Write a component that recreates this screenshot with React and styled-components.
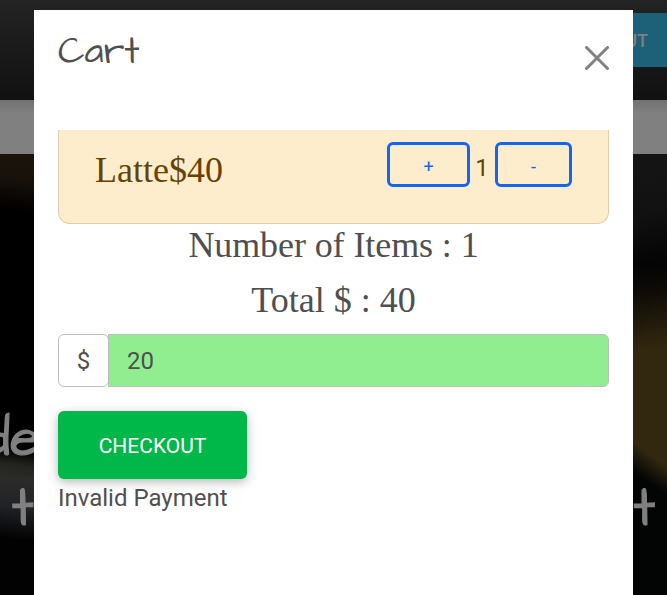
import React from "react";
import styled, { createGlobalStyle } from "styled-components";

const GlobalStyle = createGlobalStyle`
  *, *::before, *::after { box-sizing: border-box; }
  body {
    margin: 0;
    overflow: hidden;
    background: #000;
    color: #4f4f4f;
    font: 400 24px/36px Roboto, sans-serif;
  }
`;

const hand = `"Architects Daughter", Lato, cursive`;

const Page = styled.div`
  position: relative;
  display: flex;
  flex-direction: column;
  width: 667px;
  height: 595px;
  overflow: hidden;
`;

const Navbar = styled.header`
  display: flex;
  justify-content: flex-end;
  flex: none;
  height: 100px;
  padding-top: 13px;
  background: linear-gradient(#232323, #111);
`;

const NavButton = styled.button`
  display: flex;
  align-items: center;
  justify-content: flex-end;
  width: 130px;
  height: 54px;
  padding: 0 19px 0 0;
  border: 0;
  background: #1c6178;
  color: #808080;
  font: 500 18px/27px Roboto, sans-serif;
`;

const Band = styled.div`
  flex: none;
  height: 54px;
  background: linear-gradient(#727272, #808080 14px);
`;

const Hero = styled.main`
  display: flex;
  flex-direction: column;
  flex: 1;
  padding-top: 251px;
  color: #808080;
  background:
    linear-gradient(187deg, #1b140d, #17110a 30px, #000 62px, #000 298px, #24231f 314px, #2b2b2b 328px, #202226 356px, #020202 388px) 0 0 / 60px 100% no-repeat,
    linear-gradient(216deg, transparent 253px, #030404 277px) 100% 0 / 34px 100% no-repeat,
    linear-gradient(170deg, #151515, #111 60px, #040404 110px, #0c0a06 135px, #32270f 195px, #32270f) 100% 0 / 34px 100% no-repeat,
    #000;
`;

const HeroLine = styled.div`
  display: flex;
  justify-content: space-between;
  flex: none;
  height: 70px;
  padding: ${(p) => p.$padding};
  font: 400 53px/70px ${hand};
  -webkit-text-stroke: 1.2px #808080;
`;

const Lead = styled.span`
  margin-left: -17px;
`;

const Dialog = styled.section`
  position: absolute;
  top: 10px;
  left: 34px;
  display: flex;
  flex-direction: column;
  width: 599px;
  height: 600px;
  background: #fff;
`;

const DialogHeader = styled.div`
  display: flex;
  justify-content: space-between;
  flex: none;
  height: 120px;
  padding: 16px 24px 0;
`;

const Title = styled.h5`
  margin: 2px 0 0;
  font: 400 37.5px/48px ${hand};
`;

const CloseButton = styled.button`
  display: block;
  width: 24px;
  height: 24px;
  margin-top: 20px;
  padding: 0;
  border: 0;
  background: none;
  svg { display: block; }
`;

const DialogBody = styled.div`
  flex: 1;
  padding: 0 24px;
  overflow: hidden;
`;

const ItemCard = styled.div`
  display: flex;
  justify-content: space-between;
  height: 94px;
  padding: 12px 36px 0;
  border: 1px solid #dfcdab;
  border-top: 0;
  border-radius: 0 0 12px 12px;
  background: #feedcc;
  color: #664200;
`;

const ItemName = styled.div`
  padding-top: 7px;
  font: 400 36px/43px "Liberation Serif", serif;
`;

const Quantity = styled.div`
  display: flex;
  align-items: center;
  height: 45px;
`;

const Count = styled.span`
  width: 25px;
  padding: 6px 1px 0 0;
  text-align: center;
`;

const QuantityButton = styled.button`
  width: ${(p) => p.$width};
  height: 45px;
  padding: 4px 0 0;
  border: 3px solid #1266f1;
  border-radius: 6px;
  background: transparent;
  color: #1266f1;
  font: 400 18px/27px Roboto, sans-serif;
`;

const Summary = styled.div`
  height: 55px;
  text-align: center;
  font: 400 36px/43px "Liberation Serif", serif;
  letter-spacing: ${(p) => p.$tracking || "normal"};
`;

const PaymentGroup = styled.div`
  display: flex;
  height: 53px;
`;

const Currency = styled.span`
  width: 51px;
  padding-top: 1px;
  border: 1px solid #bdbdbd;
  border-radius: 6px;
  line-height: 51px;
  text-align: center;
`;

const Amount = styled.input`
  flex: 1;
  min-width: 0;
  margin-left: -1px;
  padding: 0 18px;
  border: 1px solid #bdbdbd;
  border-radius: 0 6px 6px 0;
  outline: 0;
  background: #90ee90;
  color: #4f4f4f;
  font: 400 24px/36px Roboto, sans-serif;
`;

const CheckoutButton = styled.button`
  display: block;
  width: 189px;
  height: 68px;
  margin-top: 24px;
  padding: 2px 0 0;
  border: 0;
  border-radius: 6px;
  background: #00b74a;
  box-shadow: 0 3px 8px rgba(0, 0, 0, 0.2), 0 3px 15px rgba(0, 0, 0, 0.1);
  color: #fff;
  font: 400 21px/30px Roboto, sans-serif;
`;

const Message = styled.div`
  height: 37px;
  padding-top: 1px;
`;

export default function App() {
  return (
    <>
      <GlobalStyle />
      <Page>
        <Navbar>
          <NavButton>CHECKOUT</NavButton>
        </Navbar>
        <Band />
        <Hero>
          <HeroLine $padding="0">
            <Lead>de</Lead>
          </HeroLine>
          <HeroLine $padding="0 12px 0 12px">
            <span>t</span>
            <span>t</span>
          </HeroLine>
        </Hero>
        <Dialog role="dialog" aria-label="Cart">
          <DialogHeader>
            <Title>Cart</Title>
            <CloseButton aria-label="Close">
              <svg width="24" height="24" viewBox="0 0 24 24" stroke="#808080" strokeWidth="3" strokeLinecap="round">
                <path d="M1.5 1.5l21 21M22.5 1.5l-21 21" />
              </svg>
            </CloseButton>
          </DialogHeader>
          <DialogBody>
            <ItemCard>
              <ItemName>Latte$40</ItemName>
              <Quantity>
                <QuantityButton $width="83px">+</QuantityButton>
                <Count>1</Count>
                <QuantityButton $width="77px">-</QuantityButton>
              </Quantity>
            </ItemCard>
            <Summary $tracking="-0.09px">Number of Items : 1</Summary>
            <Summary>Total $ : 40</Summary>
            <PaymentGroup>
              <Currency>$</Currency>
              <Amount defaultValue="20" aria-label="Payment amount" />
            </PaymentGroup>
            <CheckoutButton>CHECKOUT</CheckoutButton>
            <Message>Invalid Payment</Message>
          </DialogBody>
        </Dialog>
      </Page>
    </>
  );
}
